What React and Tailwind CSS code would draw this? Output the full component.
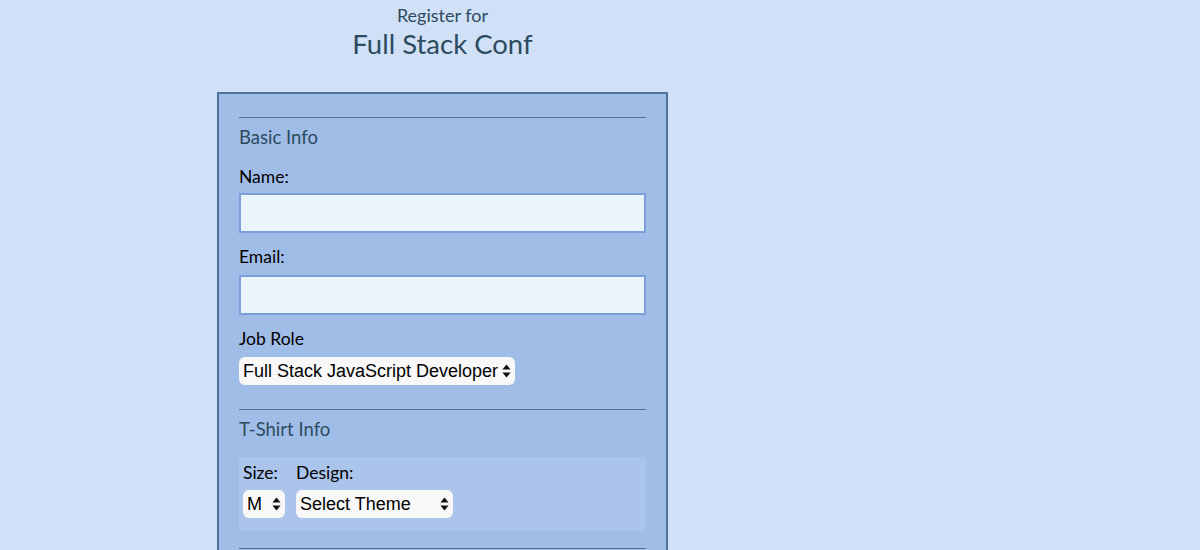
import React from 'react';

// small up/down arrows like a native select
const SelectArrows = () => (
  <svg width="9" height="14" viewBox="0 0 9 14" className="shrink-0">
    <path d="M4.5 0.5 L8.6 5.5 L0.4 5.5 Z" fill="#111" />
    <path d="M4.5 13.5 L8.6 8.5 L0.4 8.5 Z" fill="#111" />
  </svg>
);

const FakeSelect = ({ value, className }) => (
  <div
    className={`h-[28px] flex items-center justify-between bg-[#f8f8f8] rounded-[6px] pl-[4px] pr-[4px] text-[18px] text-black ${className}`}
    style={{ fontFamily: '"Liberation Sans", Arial, sans-serif' }}
  >
    <span className="leading-none whitespace-nowrap">{value}</span>
    <SelectArrows />
  </div>
);

const TextInput = ({ className }) => (
  <input
    type="text"
    className={`block w-full h-[40px] bg-[#eaf5fb] border-2 border-[#7a9fd9] outline-none ${className}`}
  />
);

const Legend = ({ children }) => (
  <div className="mt-[7px] text-[18.5px] leading-[24px] text-[#2c4b5f]">{children}</div>
);

const Label = ({ children, className = '' }) => (
  <label className={`block text-[17.5px] leading-[22px] text-black ${className}`}>{children}</label>
);

export default function App() {
  return (
    <div
      className="h-[550px] overflow-hidden bg-[#d0e0f7]"
      style={{ fontFamily: 'Lato, "Open Sans", sans-serif' }}
    >
      <div className="w-[451px] ml-[217px]">
        <header className="text-center text-[#2c4b5f]">
          <p className="pt-[4px] text-[18px] leading-[22px]">Register for</p>
          <h1 className="text-[27.5px] leading-[34px] mt-[1px]">Full Stack Conf</h1>
        </header>

        <form className="mt-[31px] border-2 border-[#4e7399] bg-[#a0bde8] px-[20px] pt-[23px] pb-[40px]">
          {/* Basic info */}
          <div className="border-t border-[#4e7399]" />
          <Legend>Basic Info</Legend>

          <Label className="mt-[17px]">Name:</Label>
          <TextInput className="mt-[5px]" />

          <Label className="mt-[13px]">Email:</Label>
          <TextInput className="mt-[7px]" />

          <Label className="mt-[13px]">Job Role</Label>
          <FakeSelect value="Full Stack JavaScript Developer" className="mt-[7px] w-[276px]" />

          {/* T-shirt info */}
          <div className="mt-[24px] border-t border-[#4e7399]" />
          <Legend>T-Shirt Info</Legend>

          <div className="mt-[16px] h-[74px] bg-[#abc4ec] rounded-[3px] pl-[4px] pt-[5px] flex gap-[11px]">
            <div>
              <Label>Size:</Label>
              <FakeSelect value="M" className="mt-[6px] w-[42px] gap-[6px]" />
            </div>
            <div>
              <Label>Design:</Label>
              <FakeSelect value="Select Theme" className="mt-[6px] w-[157px]" />
            </div>
          </div>

          <div className="mt-[17px] border-t border-[#4e7399]" />
        </form>
      </div>
    </div>
  );
}
